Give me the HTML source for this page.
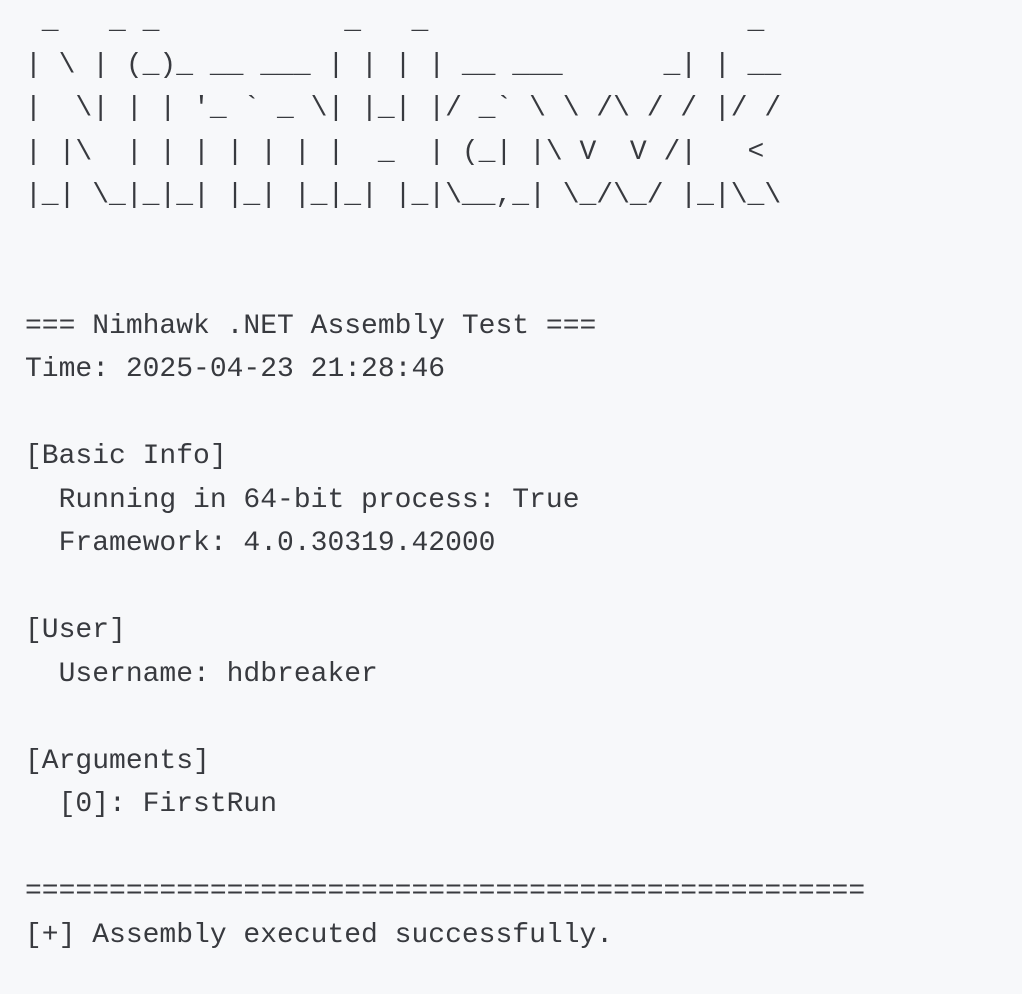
<!DOCTYPE html>
<html><head><meta charset="utf-8"><style>
html,body{margin:0;padding:0;background:#f7f8fa;width:1022px;height:994px;overflow:hidden}
pre{margin:0;padding:0 0 0 25px;font-family:"Liberation Mono",monospace;font-size:28px;line-height:43.5px;color:#383a3f;white-space:pre}
</style></head><body><pre> _   _ _           _   _                   _
| \ | (_)_ __ ___ | | | | __ ___      _| | __
|  \| | | '_ ` _ \| |_| |/ _` \ \ /\ / / |/ /
| |\  | | | | | | |  _  | (_| |\ V  V /|   &lt;
|_| \_|_|_| |_| |_|_| |_|\__,_| \_/\_/ |_|\_\


=== Nimhawk .NET Assembly Test ===
Time: 2025-04-23 21:28:46

[Basic Info]
  Running in 64-bit process: True
  Framework: 4.0.30319.42000

[User]
  Username: hdbreaker

[Arguments]
  [0]: FirstRun

==================================================
[+] Assembly executed successfully.</pre></body></html>
